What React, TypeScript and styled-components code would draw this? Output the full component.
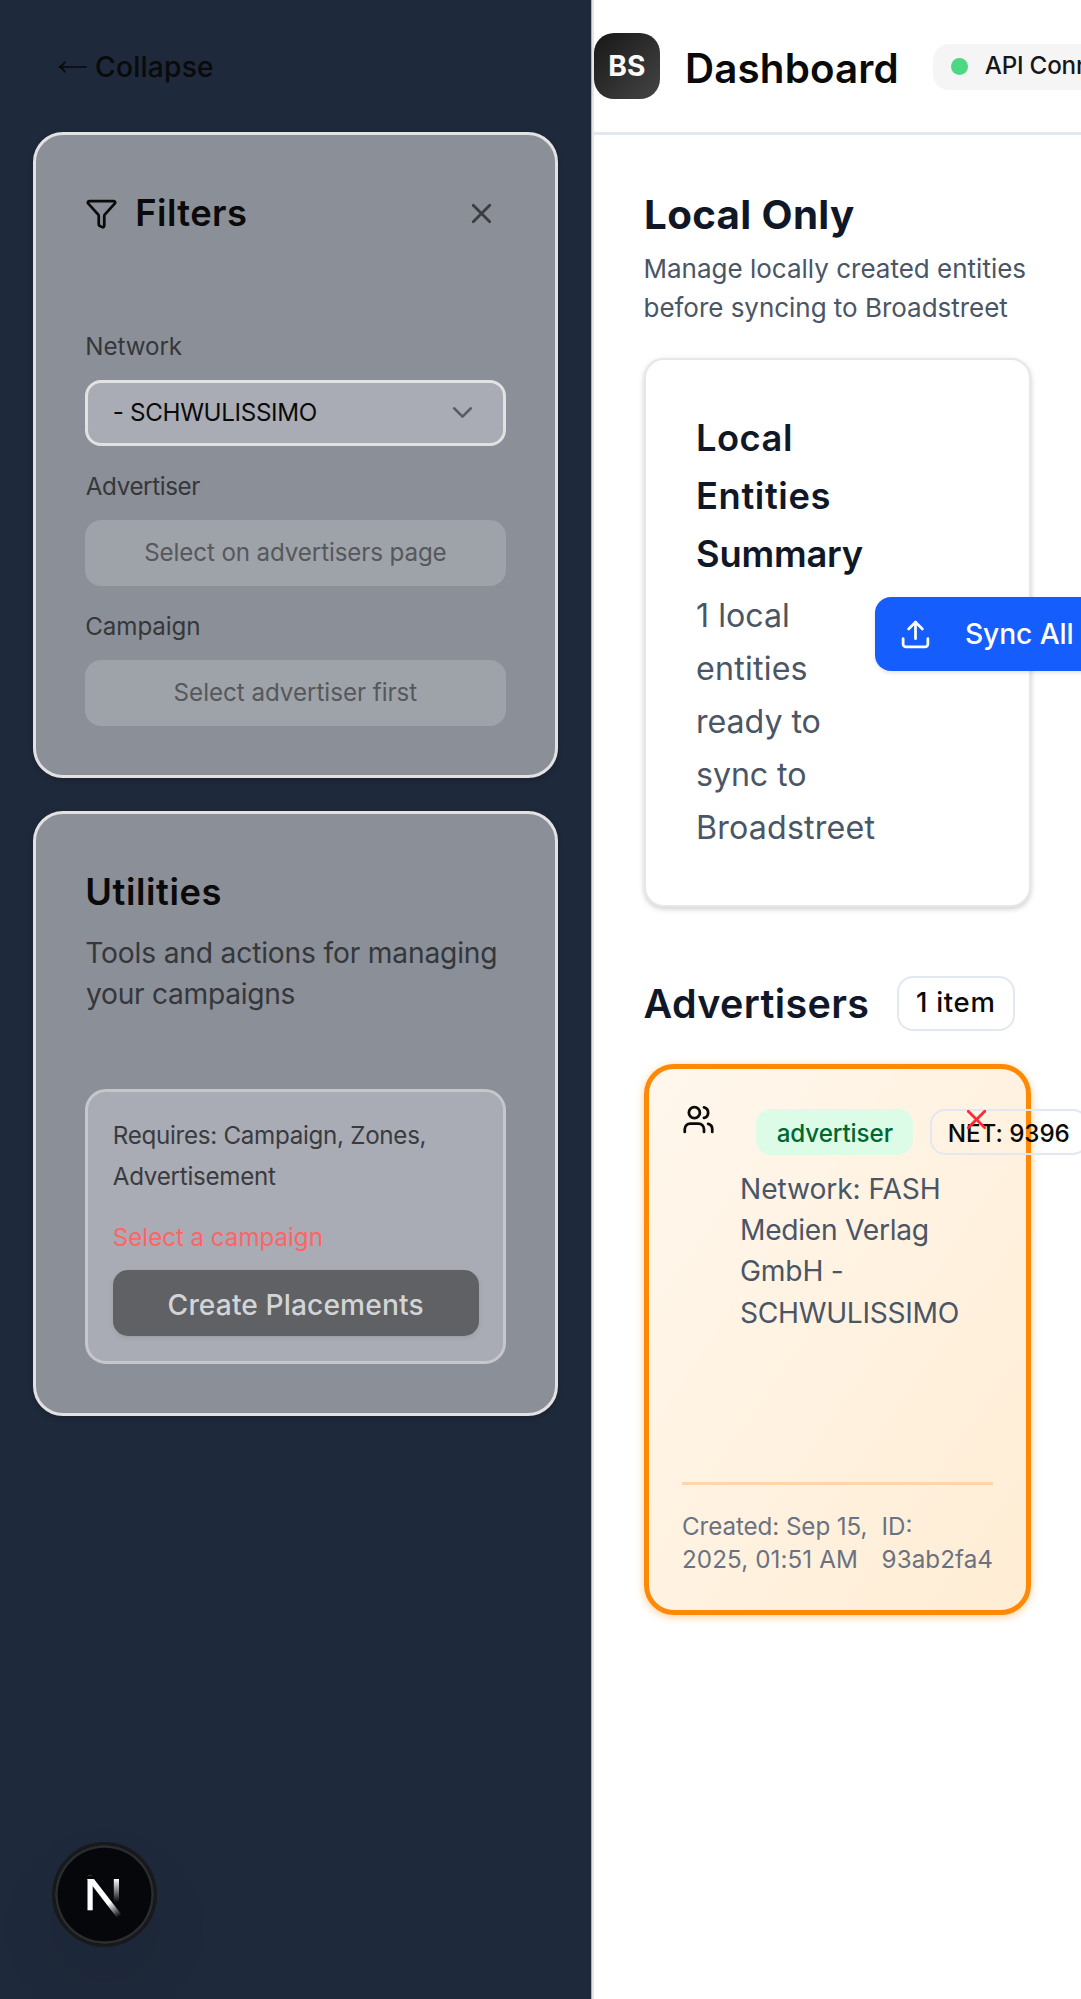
import React from "react";
import styled, { createGlobalStyle, css } from "styled-components";
import { ChevronDown, Funnel, Upload, Users, X } from "lucide-react";

const GlobalStyle = createGlobalStyle`
  *, *::before, *::after { box-sizing: border-box; }
  html, body { margin: 0; padding: 0; background: #fff; }
  body {
    font-family: Inter, "Liberation Sans", sans-serif;
    color: #0a0a0a;
    overflow: hidden;
  }
  h1, h2, h3, p { margin: 0; font-weight: inherit; }
  button { font: inherit; border: 0; padding: 0; background: none; }
  svg { display: block; flex: none; }
`;

const Page = styled.div`
  display: flex;
  width: 1081px;
  height: 1999px;
  overflow: hidden;
  position: relative;
`;

/* One rendered line of text with its own tracking */
const Line = styled.span<{ $ls?: number; $x?: number }>`
  display: block;
  white-space: nowrap;
  letter-spacing: ${(p) => p.$ls ?? 0}px;
  margin-left: ${(p) => p.$x ?? 0}px;
`;

/* ---------- Sidebar ---------- */

const Sidebar = styled.aside`
  flex: none;
  width: 594px;
  height: 100%;
  padding: 0 33px 0 33px;
  background: #1e293b;
  border-right: 2px solid #e5e5e5;
  box-shadow: inset -1px 0 #aeb2b8;
`;

const CollapseButton = styled.button`
  display: flex;
  align-items: center;
  gap: 8px;
  height: 132px;
  padding: 2px 0 0 25px;
  font-size: 28.2px;
  font-weight: 500;
  color: #0a0a0a;
`;

const Panel = styled.section<{ $height: number }>`
  width: 525px;
  height: ${(p) => p.$height}px;
  margin-bottom: 33px;
  padding: 45px 49.5px 0 49.3px;
  border: 3px solid #e2e2e3;
  border-radius: 30px;
  background: #8b8f97;
  box-shadow: 0 2px 6px rgba(0, 0, 0, 0.2);
`;

const PanelHead = styled.div`
  display: flex;
  align-items: center;
  height: 66px;
  margin-bottom: 84px;
  padding-right: 8px;
`;

const panelTitle = css`
  font-size: 36.3px;
  font-weight: 620;
  color: #0a0a0a;
`;

const FilterTitle = styled.h2`
  ${panelTitle}
  flex: 1;
  margin-left: 17px;
`;

const UtilityTitle = styled.h2`
  ${panelTitle}
  margin-top: 7px;
  line-height: 52px;
`;

const FieldLabel = styled.div`
  font-size: 24.2px;
  line-height: 33px;
  color: #35373b;
  margin-bottom: 16.7px;
`;

const control = css`
  display: flex;
  align-items: center;
  height: 66.3px;
  margin-bottom: 24px;
  border-radius: 16px;
  font-size: 24.2px;
`;

const SelectBox = styled.div`
  ${control}
  justify-content: space-between;
  padding: 0 24px 0 24.5px;
  border: 3px solid #e2e2e3;
  background: #a9acb4;
  color: #0a0a0a;
`;

const DisabledBox = styled.div`
  ${control}
  justify-content: center;
  padding-bottom: 1px;
  background: #9ea2a9;
  color: #56585c;
`;

const UtilityText = styled.p`
  margin: 14.5px 0 74px;
  font-size: 28.2px;
  line-height: 41px;
  color: #35373b;
`;

const UtilityBox = styled.div`
  height: 275px;
  padding: 23.7px 24px 0 24.5px;
  border: 3px solid #c5c7cb;
  border-radius: 21px;
  background: #a9acb4;
  font-size: 24.2px;
`;

const Requirement = styled.p`
  line-height: 41px;
  color: #3a3b3f;
`;

const Warning = styled.p`
  margin: 24px 0 15.5px;
  line-height: 33px;
  color: #ff6467;
`;

const CreateButton = styled.button`
  display: flex;
  align-items: center;
  justify-content: center;
  width: 100%;
  height: 66.5px;
  padding-top: 3px;
  border-radius: 15px;
  background: #606164;
  color: #d3d4d6;
  font-size: 28.2px;
  font-weight: 540;
  box-shadow: 0 2px 5px rgba(0, 0, 0, 0.08);
`;

/* ---------- Main area ---------- */

const Main = styled.main`
  flex: 1;
  min-width: 0;
`;

const Header = styled.header`
  display: flex;
  align-items: center;
  height: 135px;
  border-bottom: 3px solid #e2e8f0;
`;

const Logo = styled.div`
  flex: none;
  display: flex;
  align-items: center;
  justify-content: center;
  width: 66px;
  height: 66px;
  border-radius: 20px;
  background: linear-gradient(135deg, #171717, #454545);
  color: #fafafa;
  font-size: 28.2px;
  font-weight: 750;
`;

const HeaderTitle = styled.h1`
  flex: none;
  width: 247.5px;
  margin-left: 25px;
  padding-top: 4.5px;
  font-size: 40.3px;
  font-weight: 620;
`;

const StatusPill = styled.div`
  flex: none;
  display: flex;
  align-items: center;
  gap: 17px;
  height: 46.3px;
  margin-top: 2px;
  padding: 0 18.5px 2px 18.5px;
  border-radius: 16px;
  background: #f5f5f5;
  color: #171717;
  font-size: 24.2px;
  font-weight: 480;
`;

const StatusDot = styled.i`
  width: 16.7px;
  height: 16.7px;
  margin-top: 1px;
  border-radius: 50%;
  background: #4ed884;
`;

const Content = styled.div`
  width: 437px;
  padding: 50.6px 0 0 50px;
`;

const PageTitle = styled.h2`
  font-size: 40.3px;
  font-weight: 700;
  line-height: 58px;
  color: #101828;
`;

const PageText = styled.p`
  margin: 6.2px 0 30.8px -0.5px;
  font-size: 26px;
  line-height: 38.8px;
  color: #4a5565;
`;

const SummaryCard = styled.section`
  display: flex;
  align-items: flex-start;
  height: 549px;
  padding: 50px 49.5px 0 50px;
  border: 2px solid #e5e7eb;
  border-radius: 20px;
  background: #fff;
  box-shadow: 0 2px 6px rgba(0, 0, 0, 0.12), 0 2px 4px rgba(0, 0, 0, 0.08);
`;

const SummaryCopy = styled.div`
  flex: none;
  width: 178.5px;
`;

const SummaryTitle = styled.h3`
  font-size: 36.3px;
  font-weight: 620;
  line-height: 57.9px;
  color: #101828;
`;

const SummaryText = styled.p`
  margin-top: 5px;
  font-size: 32.2px;
  line-height: 53.1px;
  color: #4a5565;
`;

const SyncButton = styled.button`
  flex: none;
  display: flex;
  align-items: center;
  gap: 33px;
  width: 240px;
  height: 74px;
  margin-top: 187px;
  padding: 0 24.5px;
  border-radius: 16px;
  background: #155dfc;
  color: #fff;
  font-size: 28.2px;
  font-weight: 540;
  box-shadow: 0 2px 4px rgba(0, 0, 0, 0.1);
`;

const SectionHead = styled.div`
  display: flex;
  align-items: center;
  height: 58px;
  margin-top: 67.3px;
`;

const SectionTitle = styled.h2`
  width: 253.4px;
  margin-left: -0.6px;
  padding-top: 1px;
  font-size: 39.5px;
  font-weight: 620;
  line-height: 58px;
  color: #101828;
`;

const CountBadge = styled.span`
  display: flex;
  align-items: center;
  justify-content: center;
  width: 118px;
  height: 55px;
  padding-bottom: 3px;
  border: 2px solid #e2e8f0;
  border-radius: 16px;
  font-size: 27.5px;
  font-weight: 450;
`;

const EntityCard = styled.article`
  position: relative;
  display: flex;
  flex-direction: column;
  width: 387px;
  height: 550.5px;
  margin-top: 31.6px;
  padding: 39.8px 33px 0;
  border: 5px solid #ff8904;
  border-radius: 30px;
  background: linear-gradient(to bottom right, #fff7ed, #ffedd4) padding-box;
  box-shadow: 0 2px 8px rgba(255, 137, 4, 0.4);
`;

const EntityTop = styled.div`
  display: flex;
  align-items: flex-start;
  gap: 25px;
  height: 373px;

  > svg { margin-top: -6px; }
`;

const EntityBody = styled.div`
  flex: 1;
  min-width: 0;
`;

const BadgeRow = styled.div`
  display: flex;
  gap: 16.5px;
  margin-left: 16.3px;
`;

const Badge = styled.span<{ $outline?: boolean }>`
  flex: none;
  display: flex;
  align-items: center;
  justify-content: center;
  width: ${(p) => (p.$outline ? 158 : 157)}px;
  height: 46.3px;
  padding-top: 2px;
  border-radius: 15px;
  border: ${(p) => (p.$outline ? "2px solid #e2e8f0" : "0")};
  background: ${(p) => (p.$outline ? "transparent" : "#dcfce7")};
  color: ${(p) => (p.$outline ? "#0a0a0a" : "#016630")};
  font-size: 24.2px;
  font-weight: 500;
`;

const EntityText = styled.p`
  margin-top: 13.5px;
  font-size: 28.2px;
  line-height: 41.3px;
  color: #4a5565;
`;

const RemoveButton = styled.button`
  position: absolute;
  top: 33.5px;
  left: 311px;
  color: #fb2c36;
`;

const EntityFooter = styled.footer`
  display: flex;
  justify-content: space-between;
  padding-top: 24.8px;
  border-top: 3px solid #ffd6a7;
  font-size: 24.2px;
  line-height: 33px;
  color: #6a7282;
`;

const DevBadge = styled.div`
  position: absolute;
  left: 52px;
  bottom: 52px;
  width: 105px;
  height: 105px;
  border-radius: 50%;
  border: 3px solid #18191b;
  background: #05070b;
  box-shadow: inset 0 0 0 2.7px #2b2c2f, 0 33px 66px rgba(10, 10, 30, 0.08);
`;

/* Long thin arrow with a small swept head */
function CollapseArrow() {
  return (
    <svg width="29" height="14" viewBox="0 0 29 14" fill="none" stroke="#0a0a0a" strokeLinejoin="round">
      <path d="M1.5 7H28.7" strokeWidth="1.6" />
      <path d="M7.2 1.6C5.6 4.4 3.8 6 1.5 7C3.8 8 5.6 9.6 7.2 12.4" strokeWidth="1.9" />
    </svg>
  );
}

function DevLogo() {
  return (
    <svg width="99" height="99" viewBox="55 1845 99 99" fill="none">
      <defs>
        <linearGradient id="diag" gradientUnits="userSpaceOnUse" x1="110" y1="1902" x2="120" y2="1916">
          <stop stopColor="#fff" />
          <stop offset="1" stopColor="#fff" stopOpacity="0" />
        </linearGradient>
        <linearGradient id="stem" gradientUnits="userSpaceOnUse" x1="0" y1="1879" x2="0" y2="1902">
          <stop stopColor="#fff" />
          <stop offset="1" stopColor="#fff" stopOpacity="0" />
        </linearGradient>
        <clipPath id="mark">
          <rect x="87.3" y="1879" width="40" height="40" />
        </clipPath>
      </defs>
      <rect x="88" y="1875" width="4" height="1" fill="#2f3033" />
      <g clipPath="url(#mark)">
        <rect x="87.3" y="1879" width="5.4" height="31.3" fill="#fff" />
        <line x1="89" y1="1877" x2="119.5" y2="1916.5" stroke="url(#diag)" strokeWidth="5.4" />
        <rect x="113.8" y="1879" width="5.2" height="23" fill="url(#stem)" />
      </g>
    </svg>
  );
}

export default function App() {
  return (
    <>
      <GlobalStyle />
      <Page>
        <Sidebar>
          <CollapseButton>
            <CollapseArrow />
            <Line $ls={0.23}>Collapse</Line>
          </CollapseButton>

          <Panel $height={646.3}>
            <PanelHead>
              <Funnel size={33} color="#0a0a0a" />
              <FilterTitle>
                <Line $ls={0.4}>Filters</Line>
              </FilterTitle>
              <X size={33} color="#3b3d41" />
            </PanelHead>
            <FieldLabel>
              <Line $ls={-0.07}>Network</Line>
            </FieldLabel>
            <SelectBox>
              <Line $ls={-0.35}>- SCHWULISSIMO</Line>
              <ChevronDown size={33} color="#5a5c60" />
            </SelectBox>
            <FieldLabel>
              <Line $ls={-0.38} $x={0.5}>Advertiser</Line>
            </FieldLabel>
            <DisabledBox>
              <Line $ls={-0.13}>Select on advertisers page</Line>
            </DisabledBox>
            <FieldLabel>
              <Line $ls={-0.11}>Campaign</Line>
            </FieldLabel>
            <DisabledBox>
              <Line $ls={-0.04}>Select advertiser first</Line>
            </DisabledBox>
          </Panel>

          <Panel $height={605}>
            <UtilityTitle>
              <Line $ls={0.55}>Utilities</Line>
            </UtilityTitle>
            <UtilityText>
              <Line $ls={-0.18}>Tools and actions for managing</Line>
              <Line $ls={-0.3} $x={0.8}>your campaigns</Line>
            </UtilityText>
            <UtilityBox>
              <Requirement>
                <Line $ls={-0.3}>Requires: Campaign, Zones,</Line>
                <Line $ls={-0.27}>Advertisement</Line>
              </Requirement>
              <Warning>
                <Line $ls={-0.05}>Select a campaign</Line>
              </Warning>
              <CreateButton>
                <Line $ls={0.1}>Create Placements</Line>
              </CreateButton>
            </UtilityBox>
          </Panel>
        </Sidebar>

        <Main>
          <Header>
            <Logo>
              <Line $ls={0.3}>BS</Line>
            </Logo>
            <HeaderTitle>
              <Line $ls={0.15}>Dashboard</Line>
            </HeaderTitle>
            <StatusPill>
              <StatusDot />
              <Line $ls={-0.2}>API Connected</Line>
            </StatusPill>
          </Header>

          <Content>
            <PageTitle>
              <Line $ls={0.34}>Local Only</Line>
            </PageTitle>
            <PageText>
              <Line>Manage locally created entities</Line>
              <Line $ls={-0.03}>before syncing to Broadstreet</Line>
            </PageText>

            <SummaryCard>
              <SummaryCopy>
                <SummaryTitle>
                  <Line $ls={0.5}>Local</Line>
                  <Line $ls={0.6}>Entities</Line>
                  <Line $ls={-0.2}>Summary</Line>
                </SummaryTitle>
                <SummaryText>
                  <Line>1 local</Line>
                  <Line $ls={0.2}>entities</Line>
                  <Line $ls={-0.05}>ready to</Line>
                  <Line $ls={-0.1}>sync to</Line>
                  <Line $ls={0.18}>Broadstreet</Line>
                </SummaryText>
              </SummaryCopy>
              <SyncButton>
                <Upload size={33} />
                <Line $ls={-0.1}>Sync All</Line>
              </SyncButton>
            </SummaryCard>

            <SectionHead>
              <SectionTitle>
                <Line $ls={0.35}>Advertisers</Line>
              </SectionTitle>
              <CountBadge>
                <Line $ls={0.7}>1 item</Line>
              </CountBadge>
            </SectionHead>

            <EntityCard>
              <EntityTop>
                <Users size={33} color="#0a0a0a" />
                <EntityBody>
                  <BadgeRow>
                    <Badge>
                      <Line $ls={-0.1}>advertiser</Line>
                    </Badge>
                    <Badge $outline>
                      <Line $ls={-0.07}>NET: 9396</Line>
                    </Badge>
                  </BadgeRow>
                  <EntityText>
                    <Line $ls={-0.1}>Network: FASH</Line>
                    <Line $ls={-0.28}>Medien Verlag</Line>
                    <Line $ls={-0.2}>GmbH -</Line>
                    <Line $ls={-0.3}>SCHWULISSIMO</Line>
                  </EntityText>
                </EntityBody>
              </EntityTop>
              <EntityFooter>
                <div>
                  <Line $ls={-0.08}>Created: Sep 15,</Line>
                  <Line $ls={0.1}>2025, 01:51 AM</Line>
                </div>
                <div>
                  <Line>ID:</Line>
                  <Line $ls={0.07}>93ab2fa4</Line>
                </div>
              </EntityFooter>
              <RemoveButton aria-label="Remove">
                <X size={33} />
              </RemoveButton>
            </EntityCard>
          </Content>
        </Main>

        <DevBadge>
          <DevLogo />
        </DevBadge>
      </Page>
    </>
  );
}
